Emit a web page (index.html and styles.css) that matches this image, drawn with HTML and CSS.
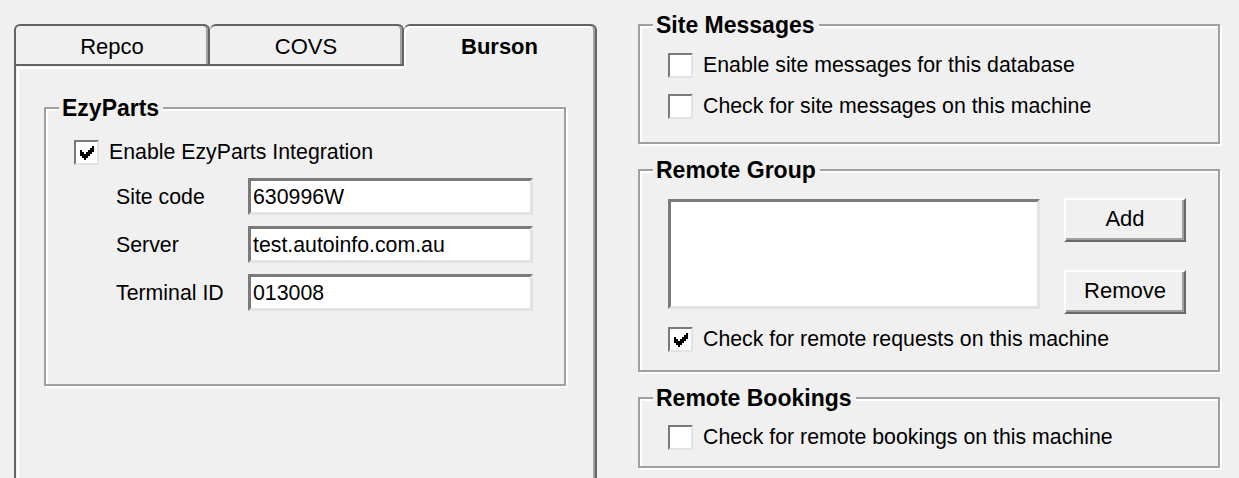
FILE: index.html
```html
<!DOCTYPE html>
<html>
<head>
<meta charset="utf-8">
<title>Integration settings</title>
<link rel="stylesheet" href="styles.css">
</head>
<body>
<div class="dialog">
  <div class="tabctl">
    <div class="tabs">
      <div class="tab first">Repco</div>
      <div class="tab mid">COVS</div>
      <div class="tab selected">Burson</div>
    </div>
    <div class="panel">
      <fieldset class="group ezy">
        <legend>EzyParts</legend>
        <div class="ezy-body">
          <div class="check">
            <span class="box"><svg class="tick" viewBox="0 0 7 7" shape-rendering="crispEdges"><rect x="6" y="0" width="1" height="1"/><rect x="5" y="1" width="2" height="1"/><rect x="0" y="2" width="1" height="1"/><rect x="4" y="2" width="3" height="1"/><rect x="0" y="3" width="2" height="1"/><rect x="3" y="3" width="3" height="1"/><rect x="0" y="4" width="5" height="1"/><rect x="1" y="5" width="3" height="1"/><rect x="2" y="6" width="1" height="1"/></svg></span>
            <span class="text">Enable EzyParts Integration</span>
          </div>
          <div class="form">
            <span class="lbl">Site code</span><div class="input">630996W</div>
            <span class="lbl">Server</span><div class="input">test.autoinfo.com.au</div>
            <span class="lbl">Terminal ID</span><div class="input">013008</div>
          </div>
        </div>
      </fieldset>
    </div>
  </div>

  <div class="right">
    <fieldset class="group">
      <legend>Site Messages</legend>
      <div class="body sitemsg">
        <div class="check"><span class="box"></span><span class="text">Enable site messages for this database</span></div>
        <div class="check"><span class="box"></span><span class="text">Check for site messages on this machine</span></div>
      </div>
    </fieldset>

    <fieldset class="group">
      <legend>Remote Group</legend>
      <div class="body remote">
        <div class="listrow">
          <div class="listbox"></div>
          <div class="buttons">
            <div class="btn">Add</div>
            <div class="btn">Remove</div>
          </div>
        </div>
        <div class="check req"><span class="box"><svg class="tick" viewBox="0 0 7 7" shape-rendering="crispEdges"><rect x="6" y="0" width="1" height="1"/><rect x="5" y="1" width="2" height="1"/><rect x="0" y="2" width="1" height="1"/><rect x="4" y="2" width="3" height="1"/><rect x="0" y="3" width="2" height="1"/><rect x="3" y="3" width="3" height="1"/><rect x="0" y="4" width="5" height="1"/><rect x="1" y="5" width="3" height="1"/><rect x="2" y="6" width="1" height="1"/></svg></span><span class="text">Check for remote requests on this machine</span></div>
      </div>
    </fieldset>

    <fieldset class="group">
      <legend>Remote Bookings</legend>
      <div class="body bookings">
        <div class="check"><span class="box"></span><span class="text">Check for remote bookings on this machine</span></div>
      </div>
    </fieldset>
  </div>
</div>
</body>
</html>
```

FILE: styles.css
```css
* { box-sizing: border-box; }
html, body { margin: 0; padding: 0; }
body {
  width: 1239px;
  height: 478px;
  overflow: hidden;
  background: #f0f0f0;
  font-family: "Liberation Sans", Arial, sans-serif;
  font-size: 21.3px;
  line-height: 26px;
  color: #000;
}
.dialog {
  display: flex;
  align-items: flex-start;
  gap: 41px;
  padding-left: 14px;
}

/* ---------- tab control ---------- */
.tabctl { width: 583px; flex: none; padding-top: 24px; }
.tabs { display: flex; height: 42px; align-items: flex-start; }
.tab {
  height: 42px;
  border-top: 2px solid #646464;
  border-right: 2px solid #646464;
  border-bottom: 2px solid #646464;
  border-radius: 6px 6px 0 0;
  box-shadow: inset -2px 0 0 #a0a0a0;
  font-size: 22px;
  font-weight: normal;
  line-height: 22px;
  padding-top: 10px;
  text-align: center;
}
.tab.first { width: 196px; border-left: 2px solid #646464; }
.tab.mid { width: 194px; }
.tab.selected {
  width: 193px;
  height: 45px;
  margin-bottom: -3px;
  border-bottom: none;
  font-weight: bold;
  background: #f0f0f0;
  box-shadow: inset -2px 0 0 #a0a0a0, inset 2px 2px 0 #fff;
  position: relative;
  z-index: 1;
}
.panel {
  height: 420px;
  border-left: 2px solid #646464;
  border-right: 2px solid #646464;
  box-shadow: inset 1px 1px 0 #f0f0f0, inset 3px 3px 0 #fff, inset -2px 0 0 #a0a0a0;
  padding: 29px 0 0 28px;
}

/* ---------- group boxes ---------- */
.group {
  margin: 0;
  padding: 0;
  min-width: 0;
  border: 2px solid #a0a0a0;
  box-shadow: inset 2px 2px 0 #fff, 2px 2px 0 #fff;
}
.group legend {
  margin-left: 13px;
  padding: 0 4px 0 3px;
  font-size: 23px;
  font-weight: bold;
  line-height: 26px;
  background: #f0f0f0;
}
.ezy { width: 522px; }
.ezy-body { height: 263px; padding: 18px 0 0 28px; }

/* ---------- checkbox ---------- */
.check {
  display: flex;
  align-items: center;
  gap: 10px;
  height: 26px;
  line-height: 26px;
  white-space: nowrap;
}
.box {
  flex: none;
  width: 25px;
  height: 25px;
  background: #fff;
  border: 2px solid;
  border-color: #7a7a7a #e3e3e3 #e3e3e3 #7a7a7a;
}
.tick { display: block; width: 16px; height: 14px; margin: 4px 0 0 3px; fill: #000; }

/* ---------- EzyParts form ---------- */
.form {
  display: grid;
  grid-template-columns: 132px 285px;
  row-gap: 11px;
  margin: 13px 0 0 42px;
  align-items: center;
}
.lbl { line-height: 26px; white-space: nowrap; }
.input {
  height: 37px;
  background: #fff;
  border: 3px solid;
  border-color: #7a7a7a #e3e3e3 #e3e3e3 #7a7a7a;
  padding-left: 2px;
  line-height: 32px;
  white-space: nowrap;
}

/* ---------- right column ---------- */
.right {
  width: 583px;
  flex: none;
  padding-top: 12px;
  display: flex;
  flex-direction: column;
  gap: 13px;
}
.right .group { width: 582px; }
.body { padding-left: 28px; }
.sitemsg { height: 104px; padding-top: 14px; display: flex; flex-direction: column; gap: 15px; }
.remote { height: 187px; padding-top: 15px; }
.bookings { height: 55px; padding-top: 13px; }

.listrow { display: flex; gap: 24px; align-items: flex-start; }
.listbox {
  width: 372px;
  height: 110px;
  margin-top: 1px;
  background: #fff;
  border: 3px solid;
  border-color: #7a7a7a #e3e3e3 #e3e3e3 #7a7a7a;
}
.buttons { display: flex; flex-direction: column; gap: 28px; }
.btn {
  width: 122px;
  height: 44px;
  border: 2px solid;
  border-color: #fff #696969 #696969 #fff;
  box-shadow: inset -2px -2px 0 #a0a0a0;
  font-size: 22px;
  line-height: 38px;
  text-align: center;
}
.check.req { margin-top: 12px; }
```
